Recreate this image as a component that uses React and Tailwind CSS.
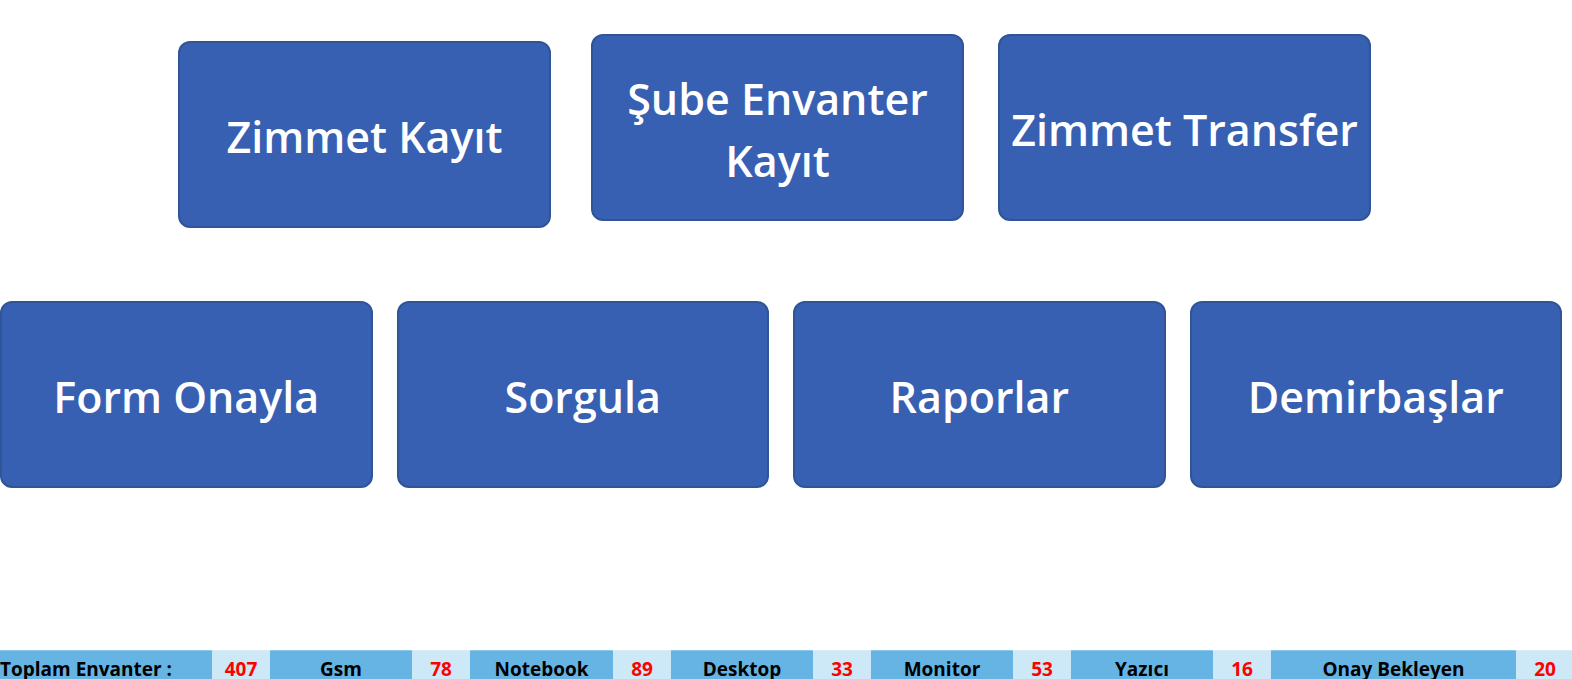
const CARD =
  "flex h-[187px] min-w-0 flex-1 cursor-pointer items-center justify-center rounded-xl border-2 border-[#2f5597] bg-[#3760b2] pt-1 text-center text-[43px] leading-[62px] font-semibold text-white";

function Card({ children, className = "" }) {
  return (
    <button type="button" className={`${CARD} ${className}`}>
      {children}
    </button>
  );
}

const totals = [
  { label: "Toplam Envanter :", value: 407, labelCol: "w-[212px]", align: "text-left" },
  { label: "Gsm", value: 78, labelCol: "w-[142px]", align: "text-center" },
  { label: "Notebook", value: 89, labelCol: "w-[143px]", align: "text-center" },
  { label: "Desktop", value: 33, labelCol: "w-[142px]", align: "text-center" },
  { label: "Monitor", value: 53, labelCol: "w-[142px]", align: "text-center" },
  { label: "Yazıcı", value: 16, labelCol: "w-[142px]", align: "text-center" },
  { label: "Onay Bekleyen", value: 20, labelCol: "w-[245px]", align: "text-center" },
];

function Totals() {
  return (
    <table className="w-full table-fixed border-collapse text-[19px] leading-[21px] font-bold whitespace-nowrap">
      <colgroup>
        {totals.flatMap((t) => [
          <col key={`${t.label}-label`} className={t.labelCol} />,
          <col key={`${t.label}-value`} className="w-[58px]" />,
        ])}
      </colgroup>
      <tbody>
        <tr>
          {totals.flatMap((t) => [
            <th
              key={`${t.label}-label`}
              scope="row"
              className={`border-t border-[#8cc8ea] bg-[#65b4e3] p-0 pt-2 text-black ${t.align}`}
            >
              {t.label}
            </th>,
            <td
              key={`${t.label}-value`}
              className="border-t border-[#d9edf8] bg-[#cde8f6] p-0 pt-2 text-center text-[#ff0000]"
            >
              {t.value}
            </td>,
          ])}
        </tr>
      </tbody>
    </table>
  );
}

export default function App() {
  return (
    <div className="flex h-screen flex-col overflow-hidden bg-white font-['Open_Sans','Noto_Sans',sans-serif]">
      <main className="flex flex-1 flex-col gap-[73px] pt-[34px]">
        <div className="flex items-start pr-[201px] pl-[178px]">
          <Card className="mt-[7px]">Zimmet Kayıt</Card>
          <Card className="ml-10">
            Şube Envanter
            <br />
            Kayıt
          </Card>
          <Card className="ml-[34px] whitespace-nowrap">Zimmet Transfer</Card>
        </div>
        <div className="flex gap-6 pr-[10px]">
          <Card>Form Onayla</Card>
          <Card>Sorgula</Card>
          <Card>Raporlar</Card>
          <Card>Demirbaşlar</Card>
        </div>
      </main>
      <footer className="h-[29px] shrink-0 overflow-hidden">
        <Totals />
      </footer>
    </div>
  );
}
